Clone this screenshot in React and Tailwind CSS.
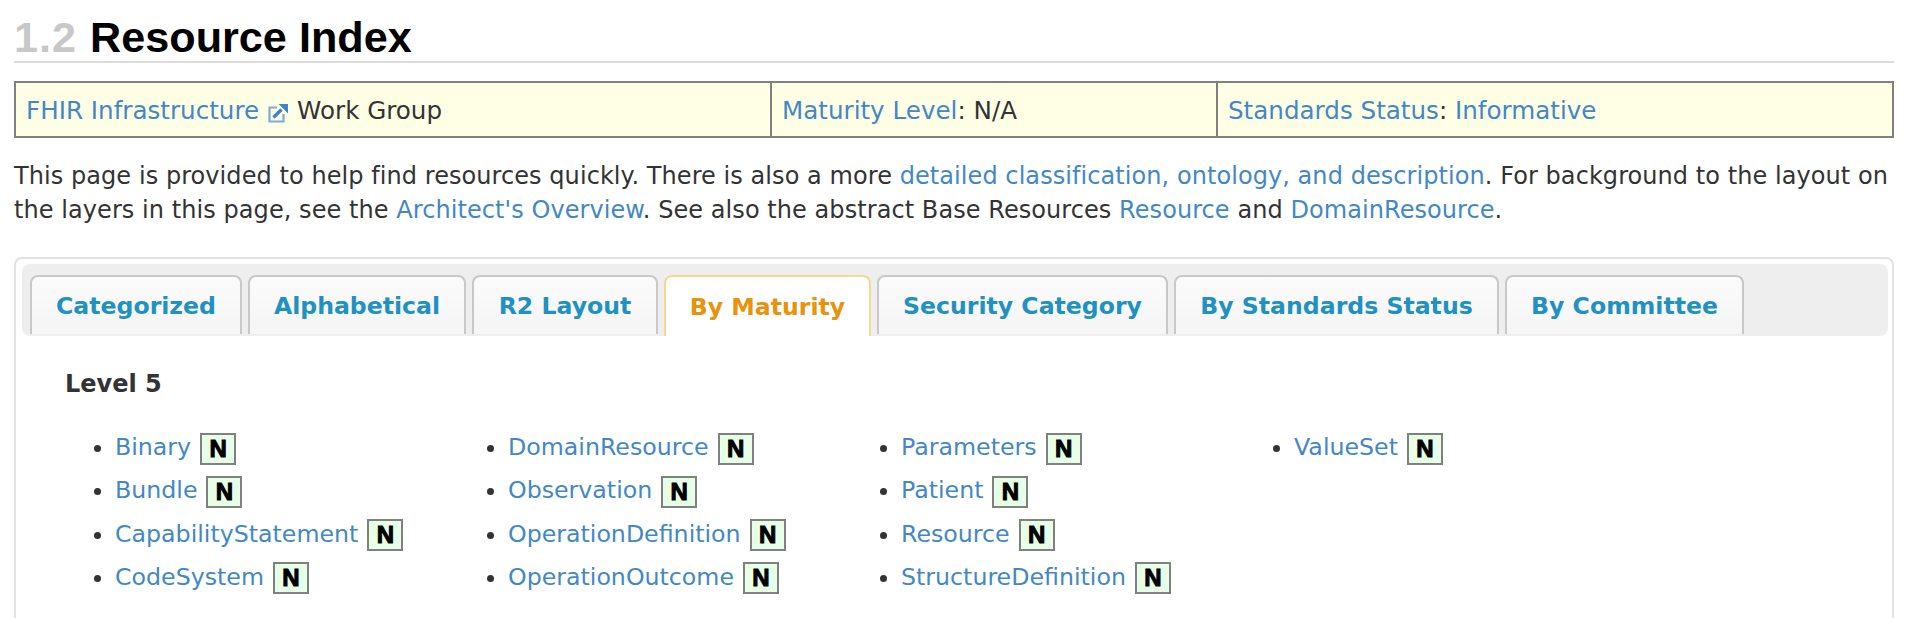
import React from "react";

const TABS = [
  { label: "Categorized", width: "w-[212px]" },
  { label: "Alphabetical", width: "w-[218px]" },
  { label: "R2 Layout", width: "w-[186px]" },
  { label: "By Maturity", width: "w-[207px]", active: true },
  { label: "Security Category", width: "w-[291px]" },
  { label: "By Standards Status", width: "w-[325px]" },
  { label: "By Committee", width: "w-[239px]" },
];

const COLUMNS = [
  ["Binary", "Bundle", "CapabilityStatement", "CodeSystem"],
  ["DomainResource", "Observation", "OperationDefinition", "OperationOutcome"],
  ["Parameters", "Patient", "Resource", "StructureDefinition"],
  ["ValueSet"],
];

function A({ children }) {
  return <a className="text-[#4388c4]">{children}</a>;
}

function ExternalIcon() {
  return (
    <svg viewBox="0 0 20 20" className="inline-block w-[20px] h-[20px] ml-[9px] mr-[9px] align-[-4px]">
      <path d="M9 4.5H1.5v14h14V11" fill="none" stroke="#7fa9d6" strokeWidth="2.2" />
      <path d="M5.5 14.5 L13.5 6.5" fill="none" stroke="#3f86c8" strokeWidth="3.4" />
      <path d="M10.5 1 H20 V10.5 Z" fill="#3f86c8" />
    </svg>
  );
}

function Badge() {
  return (
    <span
      className="inline-flex items-center justify-center w-[36px] h-[32px] ml-[9px] border-[2px] border-[#808080] bg-[#e6ffe6] text-black text-[24px] leading-none font-bold align-middle"
      style={{ fontFamily: '"Liberation Sans", Arial, sans-serif', WebkitTextStroke: "1px black" }}
    >
      N
    </span>
  );
}

function Tab({ label, width, active }) {
  return (
    <div
      className={`${width} pt-[2px] flex items-center justify-center rounded-t-[8px] border-[2px] border-b-0 font-bold text-[23.6px] ${
        active
          ? "h-[61px] border-[#f6d98f] bg-white text-[#e8920e]"
          : "h-[59px] mb-[2px] border-[#c8c8c8] bg-gradient-to-b from-[#fbfbfb] to-[#f5f5f5] text-[#2191c0]"
      }`}
    >
      {label}
    </div>
  );
}

export default function App() {
  return (
    <div
      className="h-[618px] overflow-hidden bg-white pl-[14px] pr-[16px] text-[#333] text-[24px]"
      style={{ fontFamily: '"DejaVu Sans", Verdana, sans-serif' }}
    >
      {/* Title */}
      <h1
        className="h-[63px] pt-[12px] border-b-[2px] border-[#dcdcdc] text-[43.2px] leading-[50px] font-bold text-black"
        style={{ fontFamily: '"Liberation Sans", Arial, sans-serif' }}
      >
        <span className="text-[#c8c8c8] tracking-[1px] mr-[1px]">1.2</span> Resource Index
      </h1>

      {/* Work group table */}
      <div className="mt-[18px] h-[57px] flex border-[2px] border-[#808080] bg-[#ffffe6] text-[24.6px]">
        <div className="w-[756px] flex items-center pl-[10px] pt-[3px] border-r-[2px] border-[#808080]">
          <span>
            <A>FHIR Infrastructure</A>
            <ExternalIcon />
            Work Group
          </span>
        </div>
        <div className="w-[446px] flex items-center pl-[10px] pt-[3px] border-r-[2px] border-[#808080]">
          <span>
            <A>Maturity Level</A>: N/A
          </span>
        </div>
        <div className="flex-1 flex items-center pl-[10px] pt-[3px]">
          <span>
            <A>Standards Status</A>: <A>Informative</A>
          </span>
        </div>
      </div>

      {/* Intro */}
      <p className="mt-[21px] mb-[30px] leading-[34px] whitespace-nowrap tracking-[0.065px]">
        This page is provided to help find resources quickly. There is also a more{" "}
        <A>detailed classification, ontology, and description</A>. For background to the layout on
        <br />
        the layers in this page, see the <A>Architect's Overview</A>. See also the abstract Base Resources{" "}
        <A>Resource</A> and <A>DomainResource</A>.
      </p>

      {/* Tabbed panel */}
      <div className="h-[361px] border-t-[2px] border-l-[2px] border-r-[2px] border-[#e2e2e2] rounded-t-[8px] pt-[5px] pl-[6px] pr-[4px]">
        <div className="h-[72px] flex items-end gap-[6px] pl-[8px] bg-[#eeeeee] rounded-[8px]">
          {TABS.map((t) => (
            <Tab key={t.label} {...t} />
          ))}
        </div>

        <div className="pl-[43px] pt-[30px]">
          <div className="font-bold leading-[36px]">Level 5</div>
          <div className="mt-[24px] grid grid-cols-[393px_393px_393px_393px] text-[23.7px]">
            {COLUMNS.map((col, i) => (
              <ul key={i} className="list-disc pl-[50px]">
                {col.map((name) => (
                  <li key={name} className="h-[43.3px] leading-[43.3px] whitespace-nowrap marker:text-[#333]">
                    <A>{name}</A>
                    <Badge />
                  </li>
                ))}
              </ul>
            ))}
          </div>
        </div>
      </div>
    </div>
  );
}
